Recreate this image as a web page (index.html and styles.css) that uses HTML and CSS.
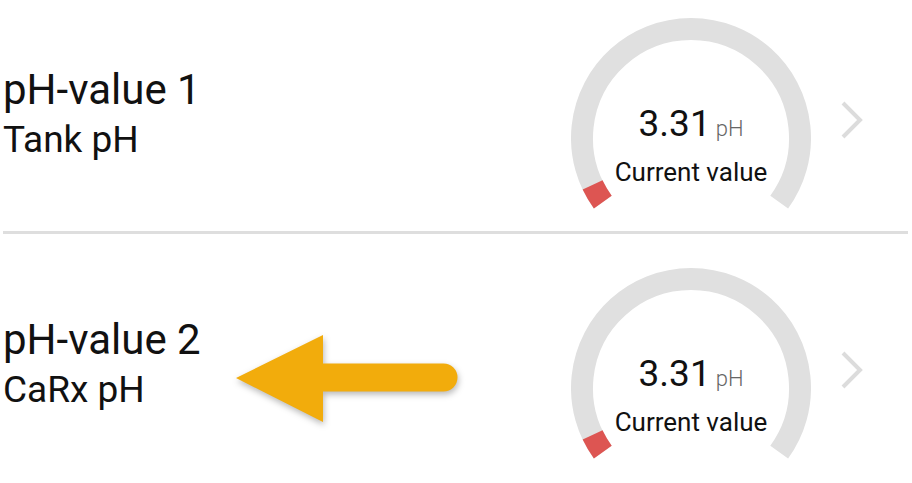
FILE: index.html
```html
<!DOCTYPE html>
<html lang="en">
<head>
  <meta charset="UTF-8" />
  <meta name="viewport" content="width=device-width, initial-scale=1.0" />
  <title>pH values</title>
  <link rel="stylesheet" href="styles.css">
</head>
<body>
  <div class="list">
    <div class="row">
      <div class="info">
        <div class="title">pH-value 1</div>
        <div class="subtitle">Tank pH</div>
      </div>
      <div class="gauge">
        <svg class="dial" width="240" height="200" viewBox="0 0 240 200">
          <path d="M31.8 184.1 A109 109 0 1 1 208.2 184.1" fill="none" stroke="#e0e0e0" stroke-width="22" />
          <path d="M31.8 184.1 A109 109 0 0 1 21.6 166.9" fill="none" stroke="#dd5552" stroke-width="22" />
        </svg>
        <div class="readout">
          <div class="value">3.31<span class="unit">pH</span></div>
          <div class="label">Current value</div>
        </div>
      </div>
      <svg class="chev" width="24" height="38" viewBox="0 0 24 38">
        <path d="M3 2 L20 19 L3 36" fill="none" stroke="#dcdcdc" stroke-width="4" />
      </svg>
    </div>

    <div class="row">
      <div class="info">
        <div class="title">pH-value 2</div>
        <div class="subtitle">CaRx pH</div>
      </div>
      <div class="gauge">
        <svg class="dial" width="240" height="200" viewBox="0 0 240 200">
          <path d="M31.8 184.1 A109 109 0 1 1 208.2 184.1" fill="none" stroke="#e0e0e0" stroke-width="22" />
          <path d="M31.8 184.1 A109 109 0 0 1 21.6 166.9" fill="none" stroke="#dd5552" stroke-width="22" />
        </svg>
        <div class="readout">
          <div class="value">3.31<span class="unit">pH</span></div>
          <div class="label">Current value</div>
        </div>
      </div>
      <svg class="chev" width="24" height="38" viewBox="0 0 24 38">
        <path d="M3 2 L20 19 L3 36" fill="none" stroke="#dcdcdc" stroke-width="4" />
      </svg>

      <!-- annotation arrow -->
      <svg class="pointer" width="240" height="100" viewBox="0 0 240 100">
        <path d="M5 48 L92 5 V33.5 H212.5 A14 14 0 0 1 212.5 61.5 H92 V92 Z" fill="#f2ac0c" />
      </svg>
    </div>
  </div>
</body>
</html>
```

FILE: styles.css
```css
body {
  font-family: Roboto, "Liberation Sans", Arial, sans-serif;
  background: #fff;
  color: #111;
  margin: 0;
  overflow: hidden;
}
.list {
  margin-top: -16px;
  padding: 0 4px 0 3px;
}
.row {
  position: relative;
  display: flex;
  align-items: flex-start;
  height: 247px;
  border-bottom: 3px solid #dedede;
}
.row:last-child {
  border-bottom: none;
}
.info {
  flex: 1;
  padding-top: 82px;
}
.title {
  font-size: 42px;
  line-height: 48px;
}
.subtitle {
  font-size: 37px;
  line-height: 52px;
}
.gauge {
  position: relative;
  width: 240px;
  margin-top: 34px;
}
.dial {
  display: block;
}
.readout {
  position: absolute;
  left: 0;
  right: 0;
  top: 86px;
  text-align: center;
}
.value {
  font-size: 37px;
  line-height: 40px;
}
.unit {
  font-size: 22px;
  font-weight: 300;
  color: #666;
  margin-left: 5px;
}
.label {
  font-size: 26px;
  line-height: 30px;
  margin-top: 8px;
}
.chev {
  margin: 117px 44px 0 29px;
}
.pointer {
  position: absolute;
  left: 228px;
  top: 96px;
  filter: drop-shadow(1px 3px 3px rgba(0, 0, 0, 0.28));
}
```
